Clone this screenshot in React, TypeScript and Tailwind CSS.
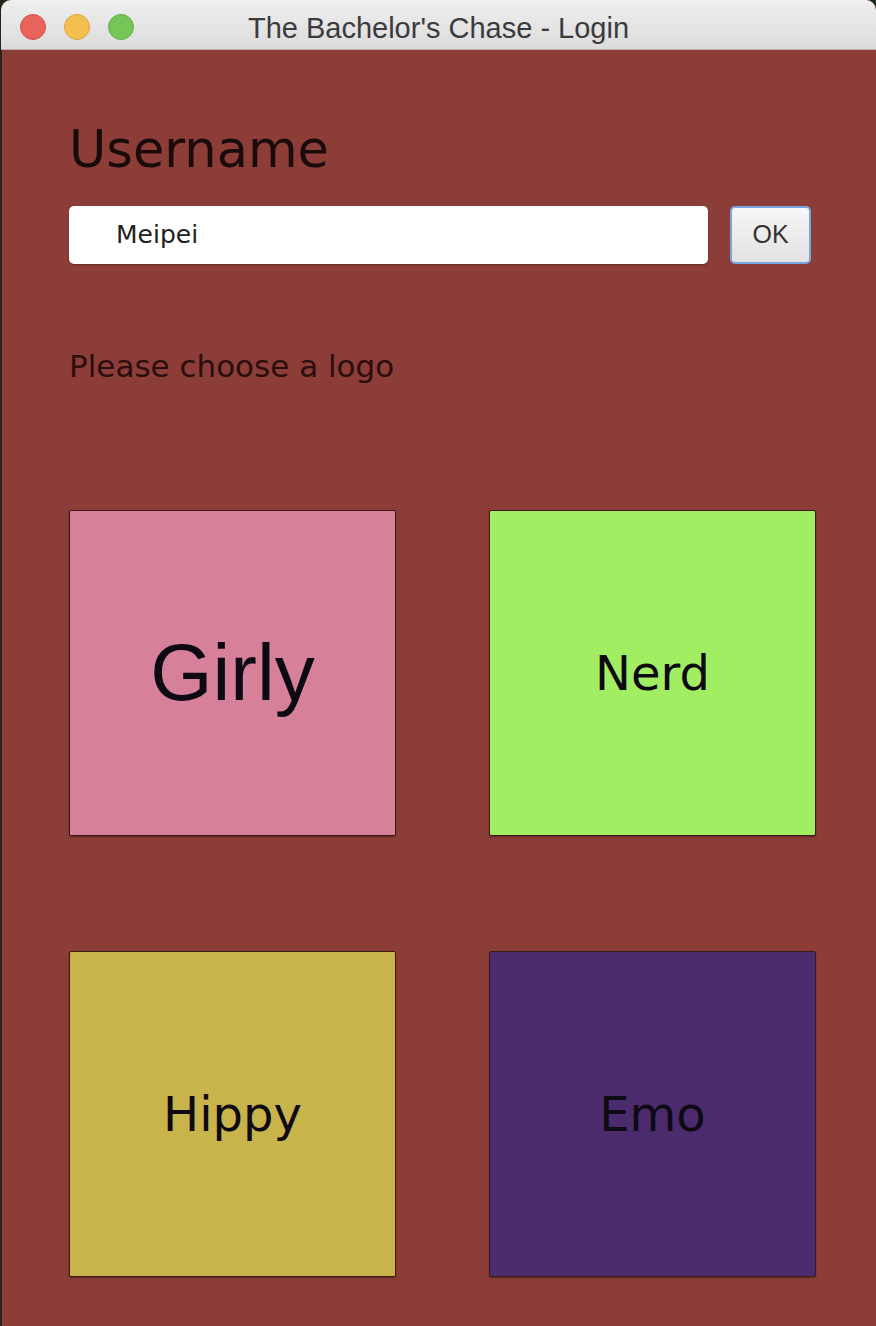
import React from 'react'

const boxes = [
  { label: 'Girly', bg: 'bg-[#d7809a]', text: 'text-[80px] font-["Liberation_Sans",Arial,sans-serif]' },
  { label: 'Nerd', bg: 'bg-[#a1ee62]', text: 'text-[48px] font-["DejaVu_Sans",sans-serif]' },
  { label: 'Hippy', bg: 'bg-[#c9b34b]', text: 'text-[48px] font-["DejaVu_Sans",sans-serif]' },
  { label: 'Emo', bg: 'bg-[#4b2a6e]', text: 'text-[48px] font-["DejaVu_Sans",sans-serif]' },
]

export default function App() {
  return (
    <div className="w-[876px] h-[1326px] bg-[#1c2a1d] overflow-hidden">
      <div className="flex flex-col h-full ml-[1px] rounded-t-[10px] overflow-hidden bg-[#8c3d37]">
        {/* title bar */}
        <div className="relative flex items-center justify-center h-[50px] pt-[7px] shrink-0 bg-gradient-to-b from-[#efefef] to-[#dcdcdc] border-b border-[#b9a9a6]">
          <div className="absolute left-[19px] top-[14px] flex gap-[18px]">
            <span className="w-[26px] h-[26px] rounded-full bg-[#e8635a] border border-[#d2504a]" />
            <span className="w-[26px] h-[26px] rounded-full bg-[#f5bf4f] border border-[#dea63c]" />
            <span className="w-[26px] h-[26px] rounded-full bg-[#74c756] border border-[#5fb043]" />
          </div>
          <span className='text-[29px] text-[#3b3b3f] font-["Liberation_Sans",Arial,sans-serif] leading-none'>
            The Bachelor's Chase - Login
          </span>
        </div>

        {/* content */}
        <div className='flex-1 pl-[67px] font-["DejaVu_Sans",sans-serif] border-l border-[#3a1d1a]'>
          <h1 className="pt-[74px] text-[51px] leading-none text-[#1a0b0b]">Username</h1>

          <div className="flex items-center gap-[22px] mt-[31px]">
            <div className="w-[639px] h-[58px] flex items-center pl-[47px] bg-white rounded-[5px] shadow-[0_1px_2px_rgba(0,0,0,0.3)]">
              <span className="text-[25px] text-[#222]">Meipei</span>
            </div>
            <button className="w-[81px] h-[58px] rounded-[5px] border-2 border-[#77a6dc] bg-gradient-to-b from-[#f6f6f6] to-[#e2e2e2] text-[25px] text-[#333] font-['Liberation_Sans',Arial,sans-serif]">
              OK
            </button>
          </div>

          <p className="mt-[87px] text-[31px] leading-none text-[#2a0e0d]">Please choose a logo</p>

          <div className="grid grid-cols-[327px_327px] gap-x-[93px] gap-y-[115px] mt-[128px]">
            {boxes.map((b) => (
              <div
                key={b.label}
                className={`w-[327px] h-[326px] flex items-center justify-center rounded-[2px] border border-[#3b1a18] shadow-[0_1px_2px_rgba(0,0,0,0.35)] ${b.bg}`}
              >
                <span className={`${b.text} leading-none text-[#0d0a14]`}>{b.label}</span>
              </div>
            ))}
          </div>
        </div>
      </div>
    </div>
  )
}
